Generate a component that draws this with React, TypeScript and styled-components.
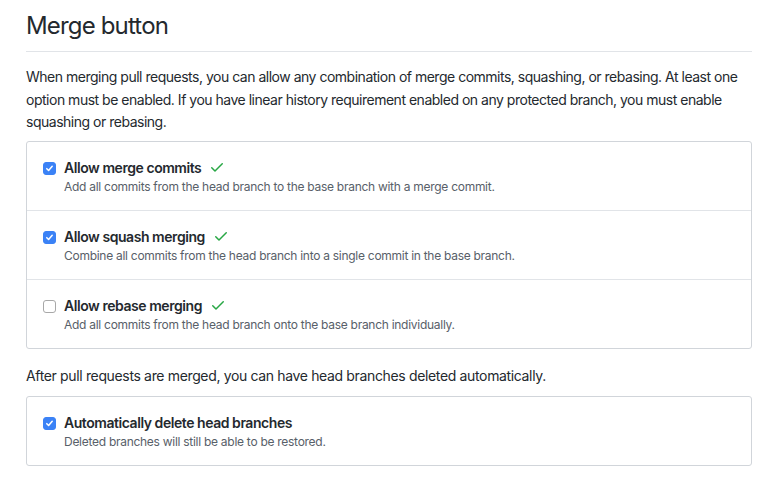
import styled, { createGlobalStyle } from "styled-components";

const GlobalStyle = createGlobalStyle`
  body {
    margin: 0;
    background: #fff;
    font-family: Inter, "Liberation Sans", Arial, sans-serif;
    letter-spacing: -0.028em;
    color: #24292e;
  }
`;

const options = [
  {
    title: "Allow merge commits",
    desc: "Add all commits from the head branch to the base branch with a merge commit.",
    checked: true,
    ok: true,
  },
  {
    title: "Allow squash merging",
    desc: "Combine all commits from the head branch into a single commit in the base branch.",
    checked: true,
    ok: true,
  },
  {
    title: "Allow rebase merging",
    desc: "Add all commits from the head branch onto the base branch individually.",
    checked: false,
    ok: true,
  },
];

function CheckMark() {
  return (
    <svg width="16" height="16" viewBox="0 0 16 16" fill="#28a745">
      <path d="M13.78 4.22a.75.75 0 010 1.06l-7.25 7.25a.75.75 0 01-1.06 0L2.22 9.28a.75.75 0 011.06-1.06L6 10.94l6.72-6.72a.75.75 0 011.06 0z" />
    </svg>
  );
}

function Checkbox({ checked }: { checked: boolean }) {
  return (
    <Box $checked={checked}>
      {checked && (
        <svg width="9" height="9" viewBox="0 0 10 10">
          <path d="M2 5.2l2 2 4-4.6" fill="none" stroke="#fff" strokeWidth="1.7" strokeLinecap="round" strokeLinejoin="round" />
        </svg>
      )}
    </Box>
  );
}

export default function App() {
  return (
    <>
      <GlobalStyle />
      <Page>
        <Heading>Merge button</Heading>
        <Intro>
          When merging pull requests, you can allow any combination of merge commits, squashing, or rebasing. At least one
          option must be enabled. If you have linear history requirement enabled on any protected branch, you must enable
          squashing or rebasing.
        </Intro>

        <Panel>
          {options.map(o => (
            <Row key={o.title}>
              <Checkbox checked={o.checked} />
              <div>
                <Title>
                  {o.title}
                  {o.ok && <CheckMark />}
                </Title>
                <Desc>{o.desc}</Desc>
              </div>
            </Row>
          ))}
        </Panel>

        <Note>After pull requests are merged, you can have head branches deleted automatically.</Note>

        <Panel>
          <Row>
            <Checkbox checked />
            <div>
              <Title>Automatically delete head branches</Title>
              <Desc>Deleted branches will still be able to be restored.</Desc>
            </div>
          </Row>
        </Panel>
      </Page>
    </>
  );
}

const Page = styled.div`
  width: 726px;
  margin-left: 26px;
  padding-bottom: 28px;
`;

const Heading = styled.h2`
  margin: 8px 0 0;
  padding-bottom: 7px;
  font-size: 24px;
  line-height: 36px;
  font-weight: 400;
  letter-spacing: -0.035em;
  border-bottom: 1px solid #e1e4e8;
`;

const Intro = styled.p`
  margin: 14px 0 7px;
  font-size: 14px;
  line-height: 22.5px;
  letter-spacing: -0.035em;
`;

const Note = styled.p`
  margin: 16px 0 9px;
  font-size: 14px;
  line-height: 22px;
  letter-spacing: -0.025em;
`;

const Panel = styled.div`
  border: 1px solid #d1d5da;
  border-radius: 3px;
`;

const Row = styled.div`
  display: flex;
  align-items: flex-start;
  gap: 8px;
  padding: 15px 16px;
  height: 38px;

  & + & {
    border-top: 1px solid #e1e4e8;
  }
`;

const Box = styled.span<{ $checked: boolean }>`
  flex: none;
  width: 13px;
  height: 13px;
  margin-top: 5px;
  box-sizing: border-box;
  border-radius: 3px;
  display: flex;
  align-items: center;
  justify-content: center;
  background: ${p => (p.$checked ? "#3b82f6" : "#fff")};
  border: 1px solid ${p => (p.$checked ? "#3b82f6" : "#a8a8a8")};
`;

const Title = styled.div`
  display: flex;
  align-items: center;
  gap: 8px;
  font-size: 14px;
  line-height: 21px;
  font-weight: 600;
`;

const Desc = styled.div`
  font-size: 12px;
  line-height: 18px;
  letter-spacing: -0.023em;
  color: #586069;
`;
